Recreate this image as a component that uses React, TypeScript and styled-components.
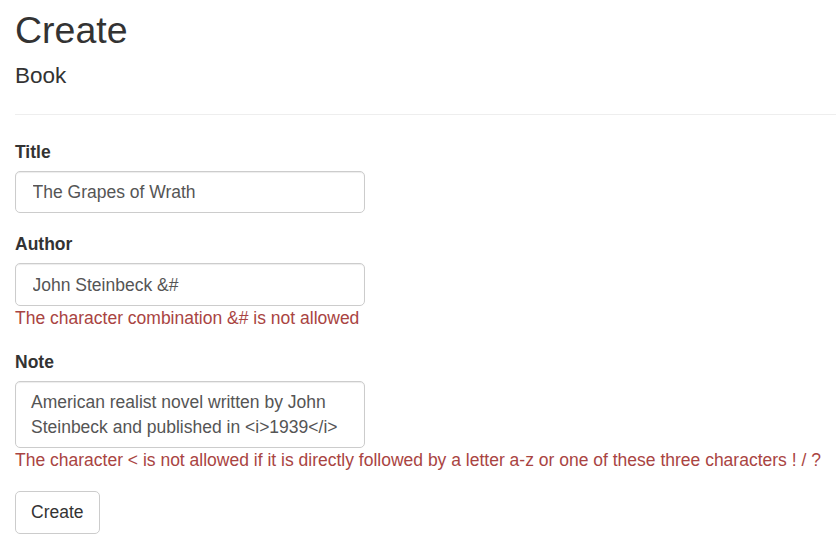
import React from "react";
import styled, { createGlobalStyle } from "styled-components";

const GlobalStyle = createGlobalStyle`
  html, body {
    margin: 0;
    padding: 0;
    background: #fff;
  }
  body {
    font-family: "Liberation Sans", Arial, Helvetica, sans-serif;
    font-size: 17.5px;
    line-height: 1.42857;
    color: #333;
  }
  * { box-sizing: border-box; }
`;

const Page = styled.div`
  padding: 0 0 0 15px;
  display: flow-root;
`;

const Title = styled.h2`
  font-size: 37.5px;
  font-weight: 500;
  line-height: 1.1;
  margin: 10px 0 12.5px;
  color: #333;
`;

const Subtitle = styled.h4`
  font-size: 22.5px;
  font-weight: 500;
  line-height: 1.1;
  margin: 12.5px 0 12.5px;
  color: #333;
`;

const Rule = styled.hr`
  margin: 25px 0;
  border: 0;
  border-top: 1px solid #eee;
  height: 0;
`;

const Form = styled.form`
  display: block;
`;

const Group = styled.div<{ $gap?: number }>`
  margin-bottom: ${(p) => p.$gap ?? 18.75}px;
`;

const Label = styled.label`
  display: block;
  font-weight: 700;
  margin-bottom: 6.25px;
  color: #333;
`;

const fieldBase = `
  display: block;
  width: 350px;
  font-family: "Liberation Sans", Arial, Helvetica, sans-serif;
  font-size: 17.5px;
  line-height: 25px;
  color: #555;
  background: #fff;
  border: 1px solid #ccc;
  border-radius: 5px;
  box-shadow: inset 0 1px 1px rgba(0, 0, 0, 0.075);
  outline: none;
  margin: 0;
`;

const Input = styled.input`
  ${fieldBase}
  height: 42.5px;
  padding: 8.5px 15px 6.5px 16.5px;
`;

const TextArea = styled.textarea`
  ${fieldBase}
  height: 67px;
  padding: 8.5px 15px 6.5px 15px;
  resize: none;
  overflow: hidden;
`;

const ErrorText = styled.span`
  display: block;
  color: #a94442;
  line-height: 25px;
  white-space: nowrap;
`;

const Button = styled.button`
  display: inline-block;
  height: 42.5px;
  padding: 8px 15px 7px;
  font-family: "Liberation Sans", Arial, Helvetica, sans-serif;
  font-size: 17.5px;
  line-height: 25px;
  color: #333;
  background: #fff;
  border: 1px solid #ccc;
  border-radius: 5px;
  cursor: pointer;
`;

export default function App() {
  return (
    <>
      <GlobalStyle />
      <Page>
        <Title>Create</Title>
        <Subtitle>Book</Subtitle>
        <Rule />
        <Form onSubmit={(e) => e.preventDefault()}>
          <Group>
            <Label htmlFor="title">Title</Label>
            <Input id="title" defaultValue="The Grapes of Wrath" />
          </Group>
          <Group $gap={19}>
            <Label htmlFor="author">Author</Label>
            <Input id="author" defaultValue="John Steinbeck &#" />
            <ErrorText>The character combination &amp;# is not allowed</ErrorText>
          </Group>
          <Group $gap={18.25}>
            <Label htmlFor="note">Note</Label>
            <TextArea
              id="note"
              defaultValue={"American realist novel written by John Steinbeck and published in <i>1939</i>"}
            />
            <ErrorText>
              The character &lt; is not allowed if it is directly followed by a letter a-z or one of these three characters ! / ?
            </ErrorText>
          </Group>
          <Button type="submit">Create</Button>
        </Form>
      </Page>
    </>
  );
}
